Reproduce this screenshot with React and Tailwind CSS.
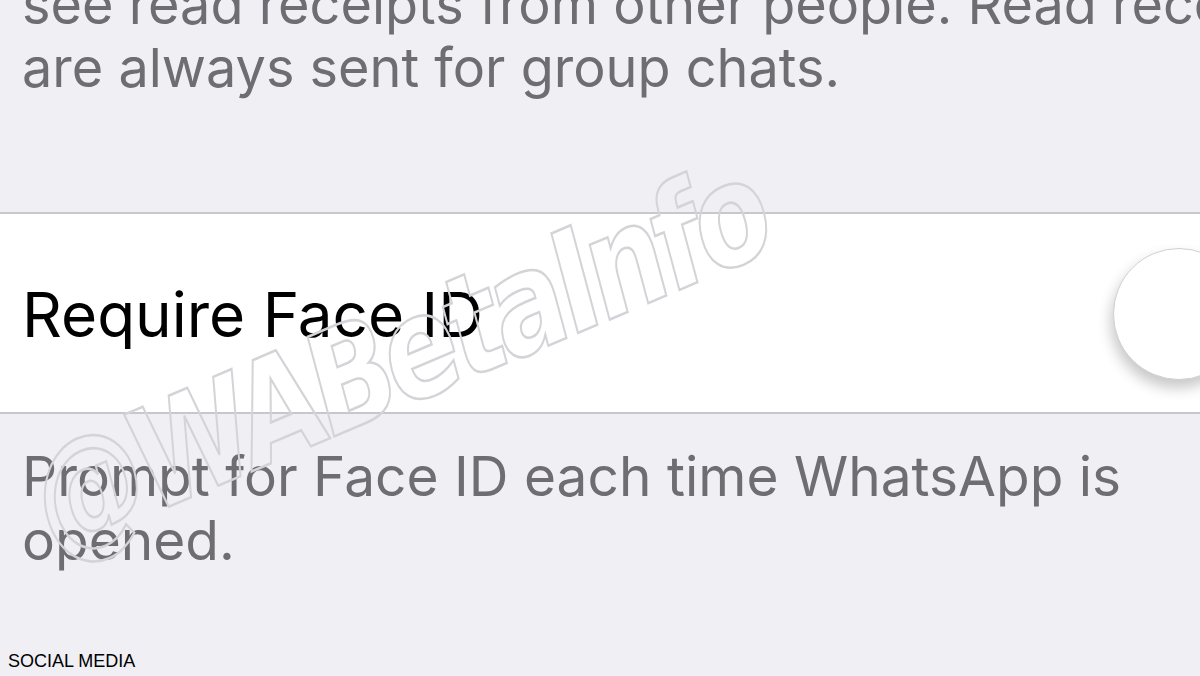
import React from 'react';

function Watermark() {
  return (
    <div className="pointer-events-none absolute left-[38px] top-[440px] origin-left -rotate-[23deg]">
      <span className="block origin-left -skew-x-[10deg] scale-x-[0.8] whitespace-nowrap font-['DejaVu_Sans',sans-serif] text-[140px] font-bold leading-none tracking-[-8px] text-transparent [-webkit-text-stroke:2.5px_#d4d4d8]">
        @WABetaInfo
      </span>
    </div>
  );
}

export default function App() {
  return (
    <div className="relative h-[676px] w-[1200px] overflow-hidden bg-[#efeff4] font-['Inter',sans-serif]">
      <p className="-mt-[27px] whitespace-nowrap pl-[22px] text-[54px] leading-[63px] text-[#6d6d72]">
        see read receipts from other people. Read receipts
        <br />
        are always sent for group chats.
      </p>

      <div className="mt-[113px] flex h-[202px] items-center border-y-2 border-[#c8c7cc] bg-white pl-[22px]">
        <span className="mt-[4px] text-[62px] leading-none text-black">Require Face ID</span>
        <div className="ml-auto mr-[-45px] mt-[2px] h-[132px] w-[132px] shrink-0 rounded-full border border-[#d0d0d0] bg-white shadow-[-2px_8px_14px_rgba(0,0,0,0.22)]" />
      </div>

      <p className="mt-[30px] pl-[22px] text-[55px] leading-[64px] text-[#6d6d72]">
        Prompt for Face ID each time WhatsApp is
        <br />
        opened.
      </p>

      <Watermark />

      <span className="absolute bottom-[6px] left-[8px] font-['Liberation_Sans',sans-serif] text-[18px] leading-none text-black">
        SOCIAL MEDIA
      </span>
    </div>
  );
}
